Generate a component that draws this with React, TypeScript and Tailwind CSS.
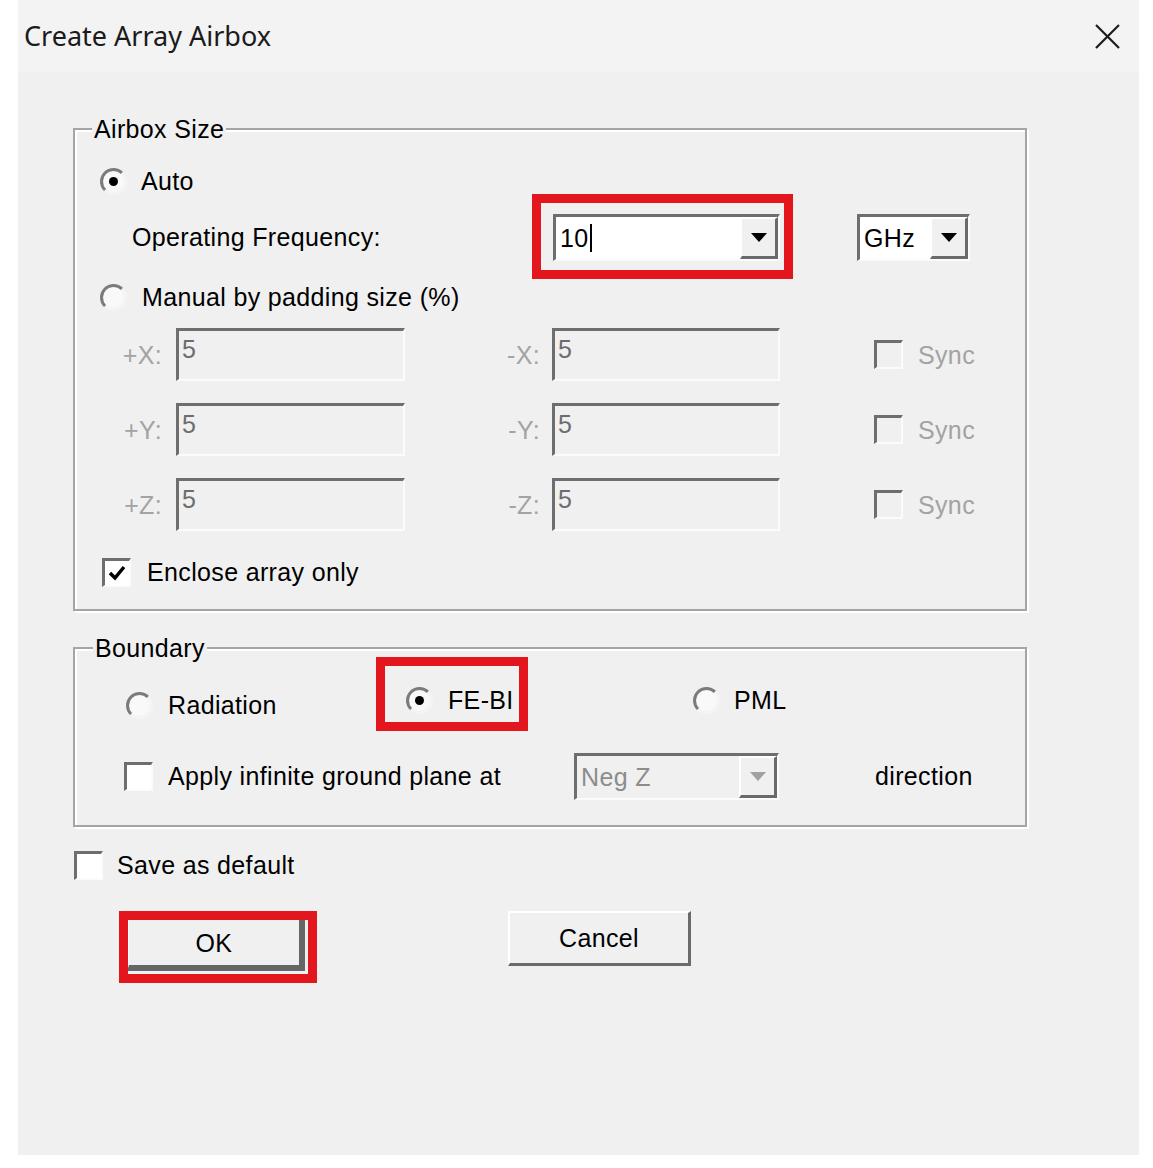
import React from "react";

// classic 3D edges used by the dialog controls
const sunken =
  "border-t-[3px] border-l-[3px] border-b-2 border-r-2 border-t-[#6e6e6e] border-l-[#6e6e6e] border-b-[#fbfbfb] border-r-[#fbfbfb]";
const raised =
  "border-t-2 border-l-2 border-b-[3px] border-r-[3px] border-t-white border-l-white border-b-[#6a6a6a] border-r-[#6a6a6a]";

const Radio: React.FC<{ checked?: boolean }> = ({ checked }) => (
  <span className="w-[27px] h-[27px] shrink-0 rounded-full bg-[#f9f9f9] border-[3px] border-t-[#7b7b7b] border-l-[#7b7b7b] border-b-[#f4f4f4] border-r-[#f4f4f4] flex items-center justify-center">
    {checked && <span className="w-[9px] h-[9px] rounded-full bg-black" />}
  </span>
);

const CheckBox: React.FC<{ checked?: boolean; disabled?: boolean }> = ({
  checked,
  disabled,
}) => (
  <span
    className={`w-[29px] h-[29px] shrink-0 flex items-center justify-center ${sunken} ${
      disabled ? "bg-[#f0f0f0]" : "bg-white"
    }`}
  >
    {checked && (
      <svg width="18" height="16" viewBox="0 0 18 16">
        <path d="M2 8 L7 13 L16 2" fill="none" stroke="#000" strokeWidth="3.5" />
      </svg>
    )}
  </span>
);

const Arrow: React.FC<{ color?: string }> = ({ color = "#000" }) => (
  <svg width="16" height="9" viewBox="0 0 16 9">
    <path d="M0 0 H16 L8 9 Z" fill={color} />
  </svg>
);

const Combo: React.FC<{
  value: string;
  width: string;
  disabled?: boolean;
  caret?: boolean;
}> = ({ value, width, disabled, caret }) => (
  <div
    className={`${width} h-[47px] flex items-stretch ${sunken} ${
      disabled ? "bg-[#f0f0f0]" : "bg-white"
    }`}
  >
    <span
      className={`flex-1 flex items-center pl-[4px] ${
        disabled ? "text-[#8c8c8c]" : "text-black"
      }`}
    >
      {value}
      {caret && <span className="w-[2px] h-[28px] bg-black ml-[1px]" />}
    </span>
    <span
      className={`w-[38px] flex items-center justify-center bg-[#f0f0f0] ${raised}`}
    >
      <Arrow color={disabled ? "#a0a0a0" : "#000"} />
    </span>
  </div>
);

const Marker: React.FC<{ className: string }> = ({ className }) => (
  <span
    className={`absolute border-[9px] border-[#e2161c] pointer-events-none ${className}`}
  />
);

const PadRow: React.FC<{ axis: string }> = ({ axis }) => (
  <div className="h-[53px] flex items-center">
    <span className="w-[101px] text-right pr-[14px] text-[#a3a3a3]">+{axis}:</span>
    <div className={`w-[229px] h-[53px] bg-[#f0f0f0] ${sunken} pl-[3px] pt-[4px] text-[#6d6d6d]`}>
      5
    </div>
    <span className="w-[147px] text-right pr-[12px] text-[#a3a3a3]">-{axis}:</span>
    <div className={`w-[228px] h-[53px] bg-[#f0f0f0] ${sunken} pl-[3px] pt-[4px] text-[#6d6d6d]`}>
      5
    </div>
    <span className="ml-[94px] flex items-center gap-[15px] text-[#a3a3a3]">
      <CheckBox disabled />
      Sync
    </span>
  </div>
);

const App: React.FC = () => {
  return (
    <div className="min-h-screen bg-white font-['Liberation_Sans',Arial,sans-serif] text-[25px] tracking-[0.35px] leading-[28px] text-black">
      <div className="ml-[18px] w-[1121px] h-[1155px] bg-[#f0f0f0] flex flex-col">
        <div className="h-[72px] shrink-0 bg-[#f3f3f3] flex items-center justify-between pl-[6px] pr-[18px]">
          <span className="font-['Noto_Sans',sans-serif] text-[27px] tracking-normal text-[#1b1b1b]">
            Create Array Airbox
          </span>
          <svg width="27" height="27" viewBox="0 0 27 27">
            <path d="M2 2 L25 25 M25 2 L2 25" stroke="#1b1b1b" strokeWidth="2.2" />
          </svg>
        </div>

        <fieldset className="ml-[55px] mt-[43px] w-[954px] border-2 border-[#a5a5a5] shadow-[inset_2px_2px_0_#fff,2px_2px_0_#fff] px-0">
          <legend className="ml-[17px] px-[2px] bg-[#f0f0f0]">Airbox Size</legend>

          <div className="mt-[20px] h-[36px] flex items-center pl-[25px] gap-[14px]">
            <Radio checked />
            Auto
          </div>

          <div className="h-[76px] flex items-center pl-[57px]">
            <span className="w-[421px]">Operating Frequency:</span>
            <div className="relative">
              <Combo value="10" width="w-[227px]" caret />
              <Marker className="-left-[21px] -top-[20px] w-[261px] h-[85px]" />
            </div>
            <div className="ml-[77px]">
              <Combo value="GHz" width="w-[113px]" />
            </div>
          </div>

          <div className="h-[44px] flex items-center pl-[25px] gap-[15px]">
            <Radio />
            Manual by padding size (%)
          </div>

          <div className="mt-[9px] flex flex-col gap-[22px]">
            <PadRow axis="X" />
            <PadRow axis="Y" />
            <PadRow axis="Z" />
          </div>

          <div className="mt-[26px] h-[30px] flex items-center pl-[27px] gap-[16px]">
            <CheckBox checked />
            Enclose array only
          </div>
          <div className="h-[22px]" />
        </fieldset>

        <fieldset className="ml-[55px] mt-[23px] w-[954px] border-2 border-[#a5a5a5] shadow-[inset_2px_2px_0_#fff,2px_2px_0_#fff] px-0">
          <legend className="ml-[18px] px-[2px] bg-[#f0f0f0]">Boundary</legend>

          <div className="h-[67px] flex items-start pl-[51px]">
            <div className="w-[280px] mt-[29px] flex items-center gap-[15px]">
              <Radio />
              Radiation
            </div>
            <div className="w-[287px] mt-[24px]">
              <div className="relative flex items-center gap-[15px]">
                <Radio checked />
                FE-BI
                <Marker className="-left-[30px] -top-[29px] w-[152px] h-[74px]" />
              </div>
            </div>
            <div className="mt-[24px] flex items-center gap-[14px]">
              <Radio />
              PML
            </div>
          </div>

          <div className="mt-[23px] h-[48px] flex items-center pl-[49px]">
            <CheckBox />
            <span className="ml-[15px] w-[406px]">Apply infinite ground plane at</span>
            <Combo value="Neg Z" width="w-[205px]" disabled />
            <span className="ml-[96px]">direction</span>
          </div>
          <div className="h-[25px]" />
        </fieldset>

        <div className="mt-[23px] h-[30px] flex items-center pl-[56px] gap-[14px]">
          <CheckBox />
          Save as default
        </div>

        <div className="mt-[31px] flex items-start pl-[109px]">
          <div className="relative mt-[7px]">
            <button className="w-[178px] h-[53px] bg-[#f0f0f0] border-t-2 border-l-2 border-b-[6px] border-r-[6px] border-t-white border-l-white border-b-[#666] border-r-[#666] flex items-center justify-center">
              OK
            </button>
            <Marker className="-left-[8px] -top-[7px] w-[198px] h-[72px]" />
          </div>
          <button
            className={`ml-[203px] w-[183px] h-[55px] bg-[#f0f0f0] ${raised} flex items-center justify-center`}
          >
            Cancel
          </button>
        </div>
      </div>
    </div>
  );
};

export default App;
